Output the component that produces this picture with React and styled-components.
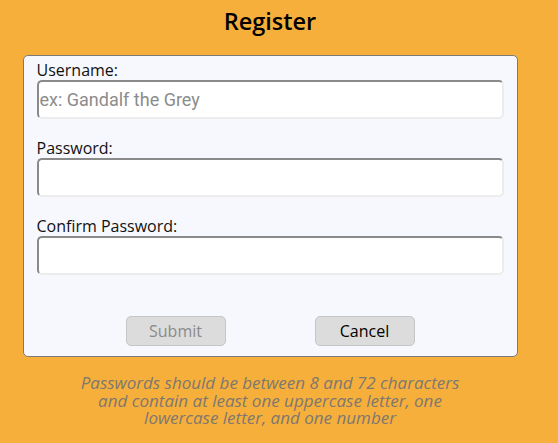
import React from "react";
import styled, { createGlobalStyle } from "styled-components";

const GlobalStyle = createGlobalStyle`
  html, body {
    margin: 0;
    background: #f7af3b;
  }
  body {
    font-family: "Open Sans", "Liberation Sans", sans-serif;
  }
`;

const Page = styled.div`
  width: 540px;
  display: flex;
  flex-direction: column;
  align-items: center;
`;

const Title = styled.h2`
  margin: 5px 0 0;
  height: 50px;
  font-size: 23.5px;
  font-weight: 600;
  line-height: 33px;
  color: #000;
`;

const Card = styled.form`
  box-sizing: border-box;
  width: 495px;
  padding: 5px 13px 10px;
  background: #f7f8fd;
  border: 1px solid #7a7a7a;
  border-radius: 5px;
  display: flex;
  flex-direction: column;
`;

const Field = styled.div`
  display: flex;
  flex-direction: column;
  margin-bottom: ${(p) => p.$gap ?? 20}px;
`;

const Label = styled.label`
  font-size: 16px;
  line-height: 19px;
  color: #111;
`;

const Input = styled.input`
  box-sizing: border-box;
  width: 467px;
  height: 39px;
  padding: 0 1px;
  border: 2px solid #ececec;
  border-top-color: #8a8a8a;
  border-left-color: #8a8a8a;
  border-radius: 5px;
  background: #fff;
  font-family: Roboto, "Liberation Sans", sans-serif;
  font-size: 18px;
  color: #222;
  outline: none;

  &::placeholder {
    color: #8c8c8c;
  }
`;

const Buttons = styled.div`
  display: flex;
  justify-content: center;
  gap: 89px;
  margin-top: 41px;
`;

const Button = styled.button`
  width: 100px;
  height: 30px;
  border: 1px solid #c6c6c6;
  border-radius: 5px;
  background: #dcdcdc;
  font-family: "Open Sans", "Liberation Sans", sans-serif;
  font-size: 16px;
  color: ${(p) => (p.disabled ? "#8a8a8a" : "#000")};
  padding: 0;
`;

const Note = styled.p`
  width: 384px;
  margin: 17px 0 0;
  text-align: center;
  font-style: italic;
  font-size: 17px;
  line-height: 17.5px;
  color: #7d7870;
`;

export default function App() {
  return (
    <>
      <GlobalStyle />
      <Page>
        <Title>Register</Title>
        <Card onSubmit={(e) => e.preventDefault()}>
          <Field>
            <Label>Username:</Label>
            <Input placeholder="ex: Gandalf the Grey" />
          </Field>
          <Field>
            <Label>Password:</Label>
            <Input type="password" />
          </Field>
          <Field $gap={0}>
            <Label>Confirm Password:</Label>
            <Input type="password" />
          </Field>
          <Buttons>
            <Button type="submit" disabled>
              Submit
            </Button>
            <Button type="button">Cancel</Button>
          </Buttons>
        </Card>
        <Note>
          Passwords should be between 8 and 72 characters and contain at least
          one uppercase letter, one lowercase letter, and one number
        </Note>
      </Page>
    </>
  );
}
